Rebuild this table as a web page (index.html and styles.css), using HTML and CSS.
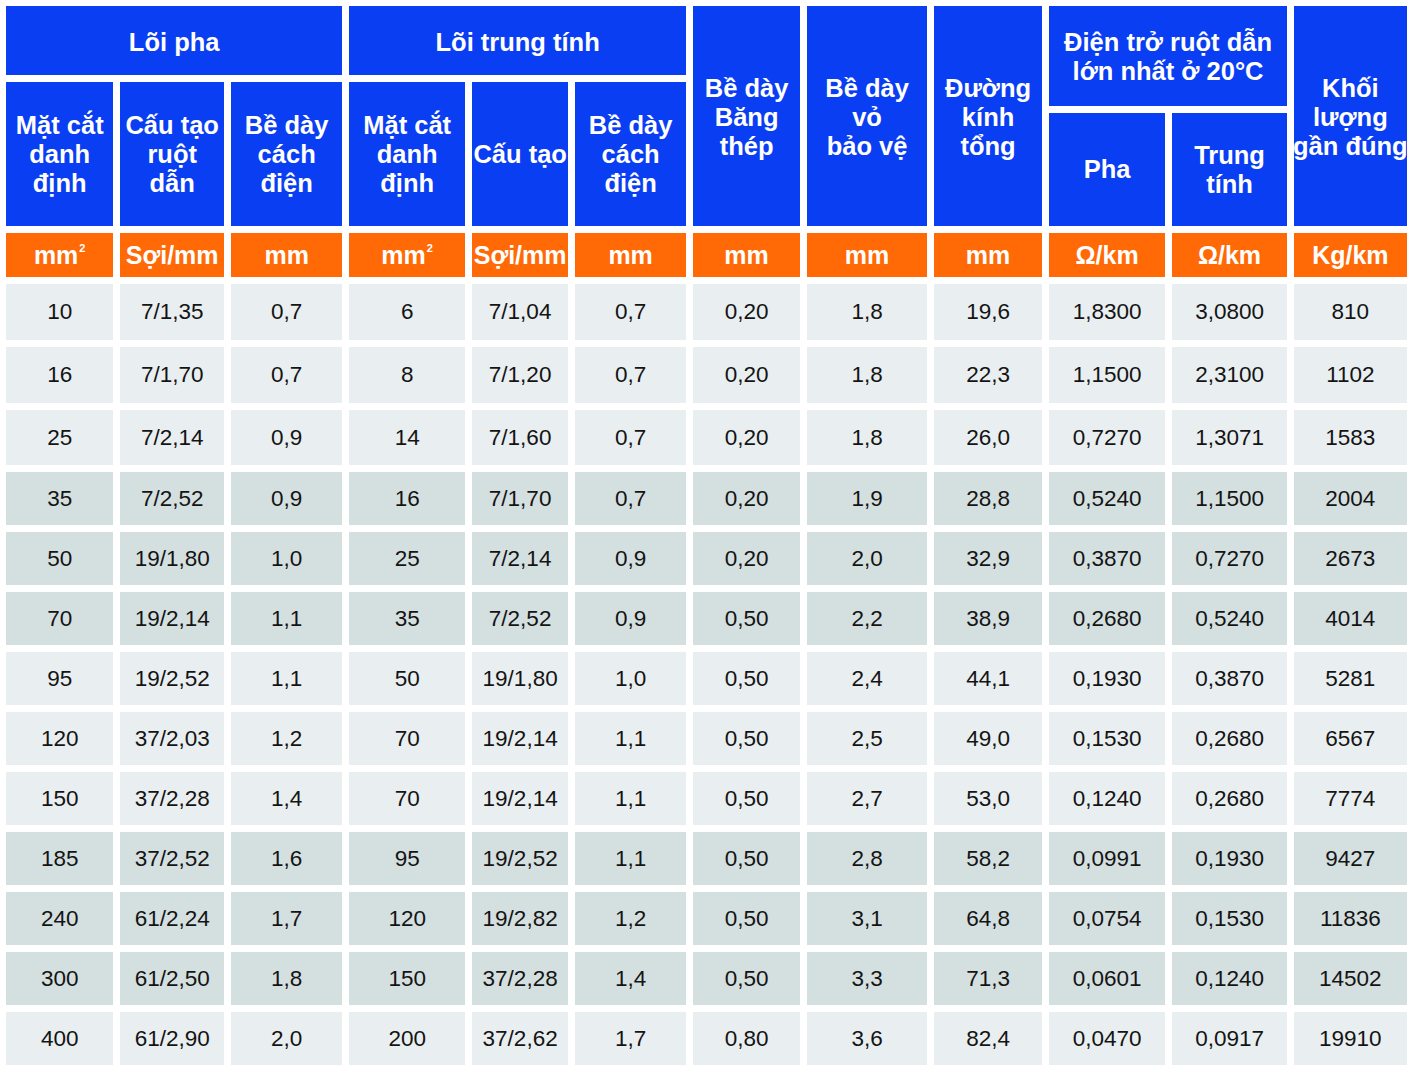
FILE: index.html
```html
<!DOCTYPE html>
<html lang="vi">
<head>
<meta charset="utf-8">
<title>Bảng thông số cáp</title>
<link rel="stylesheet" href="styles.css">
</head>
<body>
<div class="sheet">
  <div class="hd c1-3 rA">Lõi pha</div>
  <div class="hd c4-6 rA">Lõi trung tính</div>
  <div class="hd c7 rAll">Bề dày<br>Băng<br>thép</div>
  <div class="hd c8 rAll">Bề dày<br>vỏ<br>bảo vệ</div>
  <div class="hd c9 rAll">Đường<br>kính<br>tổng</div>
  <div class="hd c10-11 rAB">Điện trở ruột dẫn<br>lớn nhất ở 20°C</div>
  <div class="hd c12 rAll">Khối<br>lượng<br>gần đúng</div>

  <div class="hd c1 rBC">Mặt cắt<br>danh<br>định</div>
  <div class="hd c2 rBC">Cấu tạo<br>ruột<br>dẫn</div>
  <div class="hd c3 rBC">Bề dày<br>cách<br>điện</div>
  <div class="hd c4 rBC">Mặt cắt<br>danh<br>định</div>
  <div class="hd c5 rBC">Cấu tạo</div>
  <div class="hd c6 rBC">Bề dày<br>cách<br>điện</div>
  <div class="hd c10 rC">Pha</div>
  <div class="hd c11 rC">Trung<br>tính</div>

  <div class="unit">mm<span class="sup">2</span></div>
  <div class="unit">Sợi/mm</div>
  <div class="unit">mm</div>
  <div class="unit">mm<span class="sup">2</span></div>
  <div class="unit">Sợi/mm</div>
  <div class="unit">mm</div>
  <div class="unit">mm</div>
  <div class="unit">mm</div>
  <div class="unit">mm</div>
  <div class="unit">Ω/km</div>
  <div class="unit">Ω/km</div>
  <div class="unit">Kg/km</div>

  <div class="td">10</div><div class="td">7/1,35</div><div class="td">0,7</div><div class="td">6</div><div class="td">7/1,04</div><div class="td">0,7</div><div class="td">0,20</div><div class="td">1,8</div><div class="td">19,6</div><div class="td">1,8300</div><div class="td">3,0800</div><div class="td">810</div>
  <div class="td">16</div><div class="td">7/1,70</div><div class="td">0,7</div><div class="td">8</div><div class="td">7/1,20</div><div class="td">0,7</div><div class="td">0,20</div><div class="td">1,8</div><div class="td">22,3</div><div class="td">1,1500</div><div class="td">2,3100</div><div class="td">1102</div>
  <div class="td">25</div><div class="td">7/2,14</div><div class="td">0,9</div><div class="td">14</div><div class="td">7/1,60</div><div class="td">0,7</div><div class="td">0,20</div><div class="td">1,8</div><div class="td">26,0</div><div class="td">0,7270</div><div class="td">1,3071</div><div class="td">1583</div>
  <div class="td dk">35</div><div class="td dk">7/2,52</div><div class="td dk">0,9</div><div class="td dk">16</div><div class="td dk">7/1,70</div><div class="td dk">0,7</div><div class="td dk">0,20</div><div class="td dk">1,9</div><div class="td dk">28,8</div><div class="td dk">0,5240</div><div class="td dk">1,1500</div><div class="td dk">2004</div>
  <div class="td dk">50</div><div class="td dk">19/1,80</div><div class="td dk">1,0</div><div class="td dk">25</div><div class="td dk">7/2,14</div><div class="td dk">0,9</div><div class="td dk">0,20</div><div class="td dk">2,0</div><div class="td dk">32,9</div><div class="td dk">0,3870</div><div class="td dk">0,7270</div><div class="td dk">2673</div>
  <div class="td dk">70</div><div class="td dk">19/2,14</div><div class="td dk">1,1</div><div class="td dk">35</div><div class="td dk">7/2,52</div><div class="td dk">0,9</div><div class="td dk">0,50</div><div class="td dk">2,2</div><div class="td dk">38,9</div><div class="td dk">0,2680</div><div class="td dk">0,5240</div><div class="td dk">4014</div>
  <div class="td">95</div><div class="td">19/2,52</div><div class="td">1,1</div><div class="td">50</div><div class="td">19/1,80</div><div class="td">1,0</div><div class="td">0,50</div><div class="td">2,4</div><div class="td">44,1</div><div class="td">0,1930</div><div class="td">0,3870</div><div class="td">5281</div>
  <div class="td">120</div><div class="td">37/2,03</div><div class="td">1,2</div><div class="td">70</div><div class="td">19/2,14</div><div class="td">1,1</div><div class="td">0,50</div><div class="td">2,5</div><div class="td">49,0</div><div class="td">0,1530</div><div class="td">0,2680</div><div class="td">6567</div>
  <div class="td">150</div><div class="td">37/2,28</div><div class="td">1,4</div><div class="td">70</div><div class="td">19/2,14</div><div class="td">1,1</div><div class="td">0,50</div><div class="td">2,7</div><div class="td">53,0</div><div class="td">0,1240</div><div class="td">0,2680</div><div class="td">7774</div>
  <div class="td dk">185</div><div class="td dk">37/2,52</div><div class="td dk">1,6</div><div class="td dk">95</div><div class="td dk">19/2,52</div><div class="td dk">1,1</div><div class="td dk">0,50</div><div class="td dk">2,8</div><div class="td dk">58,2</div><div class="td dk">0,0991</div><div class="td dk">0,1930</div><div class="td dk">9427</div>
  <div class="td dk">240</div><div class="td dk">61/2,24</div><div class="td dk">1,7</div><div class="td dk">120</div><div class="td dk">19/2,82</div><div class="td dk">1,2</div><div class="td dk">0,50</div><div class="td dk">3,1</div><div class="td dk">64,8</div><div class="td dk">0,0754</div><div class="td dk">0,1530</div><div class="td dk">11836</div>
  <div class="td dk">300</div><div class="td dk">61/2,50</div><div class="td dk">1,8</div><div class="td dk">150</div><div class="td dk">37/2,28</div><div class="td dk">1,4</div><div class="td dk">0,50</div><div class="td dk">3,3</div><div class="td dk">71,3</div><div class="td dk">0,0601</div><div class="td dk">0,1240</div><div class="td dk">14502</div>
  <div class="td">400</div><div class="td">61/2,90</div><div class="td">2,0</div><div class="td">200</div><div class="td">37/2,62</div><div class="td">1,7</div><div class="td">0,80</div><div class="td">3,6</div><div class="td">82,4</div><div class="td">0,0470</div><div class="td">0,0917</div><div class="td">19910</div>
</div>
</body>
</html>
```

FILE: styles.css
```css
html, body {
  margin: 0;
  padding: 0;
  background: #ffffff;
}

body {
  padding: 6px 0 0 6px;
  font-family: "Liberation Sans", Arial, sans-serif;
}

.sheet {
  display: grid;
  grid-template-columns: 107.4px 104.4px 111.4px 116.4px 96.4px 111.4px 107.4px 120.4px 108.4px 116.4px 115.4px 113px;
  grid-template-rows: 69px 24px 113px 44px 56px 56px 55px repeat(10, 53px);
  column-gap: 6.6px;
  row-gap: 7px;
}

.hd {
  background: #0a3ef2;
  color: #ffffff;
  font-weight: bold;
  font-size: 25.5px;
  line-height: 29px;
  white-space: nowrap;
  text-align: center;
  display: flex;
  align-items: center;
  justify-content: center;
  overflow: visible;
}

.c1-3 { grid-column: 1 / 4; }
.c4-6 { grid-column: 4 / 7; }
.c7 { grid-column: 7; }
.c8 { grid-column: 8; }
.c9 { grid-column: 9; }
.c10-11 { grid-column: 10 / 12; }
.c12 { grid-column: 12; }
.c1 { grid-column: 1; }
.c2 { grid-column: 2; }
.c3 { grid-column: 3; }
.c4 { grid-column: 4; }
.c5 { grid-column: 5; }
.c6 { grid-column: 6; }
.c10 { grid-column: 10; }
.c11 { grid-column: 11; }

.rA { grid-row: 1; padding-top: 4px; }
.rAB { grid-row: 1 / 3; padding-top: 2px; }
.rAll { grid-row: 1 / 4; padding-top: 2px; }
.rBC { grid-row: 2 / 4; }
.rC { grid-row: 3; }

.unit {
  background: #ff6a06;
  color: #ffffff;
  font-weight: bold;
  font-size: 25px;
  white-space: nowrap;
  display: flex;
  align-items: center;
  justify-content: center;
  padding-top: 1px;
}

.sup {
  font-size: 11px;
  align-self: flex-start;
  margin-top: 8px;
  margin-left: 1px;
}

.td {
  background: #e9eef0;
  color: #141414;
  font-size: 22.5px;
  display: flex;
  align-items: center;
  justify-content: center;
  white-space: nowrap;
}

.td.dk {
  background: #d4dfe0;
}
```
